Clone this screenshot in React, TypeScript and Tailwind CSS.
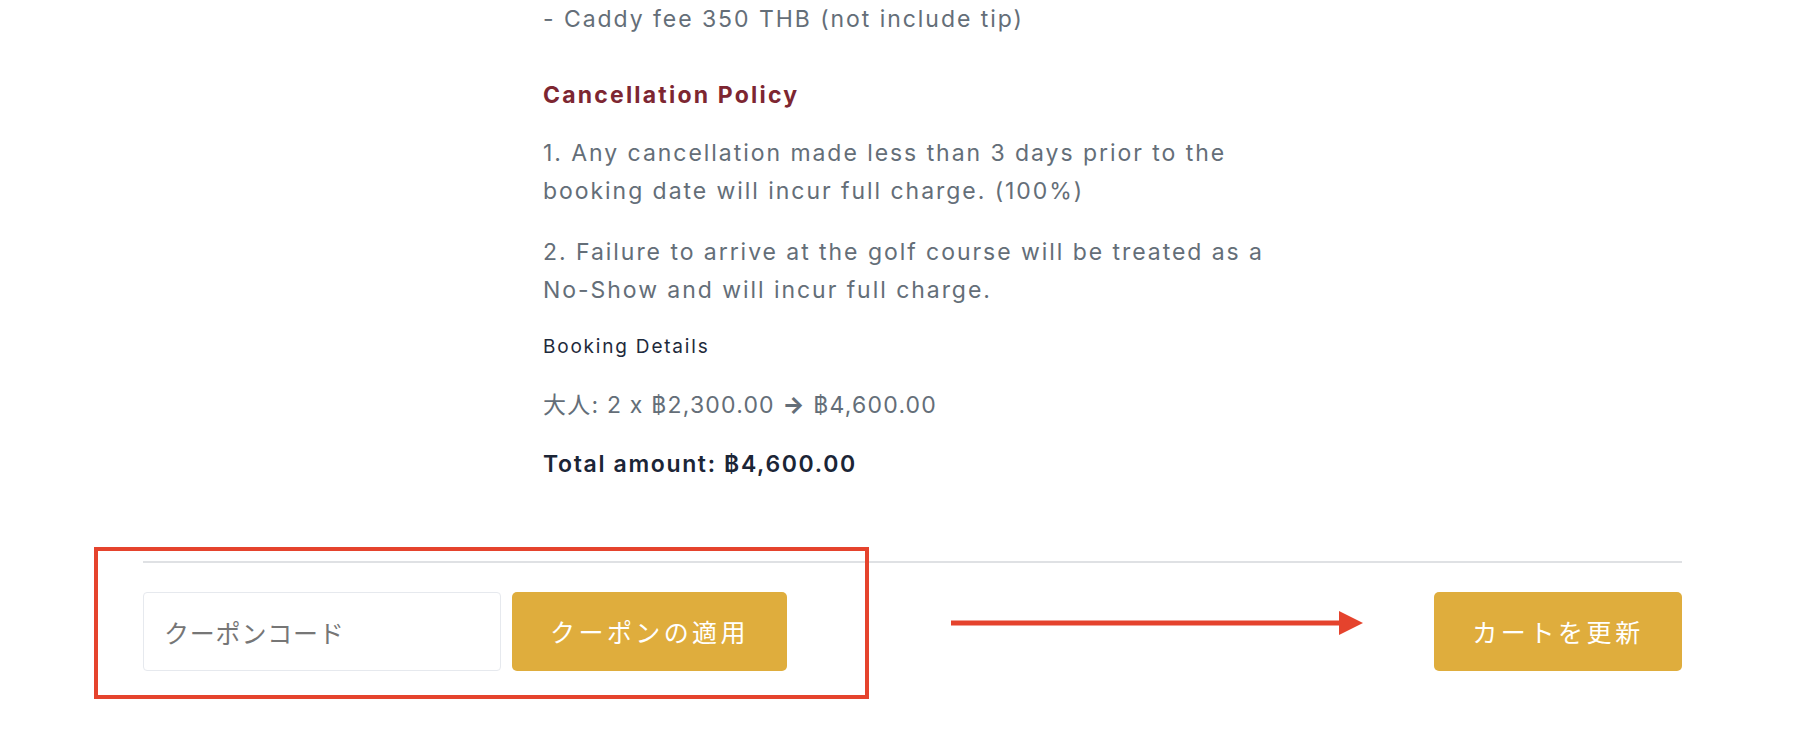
import React from "react";

const bodyFont = {
  fontFamily: "Inter, 'Noto Sans CJK JP', 'DejaVu Sans', sans-serif",
};

export default function App() {
  return (
    <div className="relative h-[744px] w-[1804px] overflow-hidden bg-white">
      <div className="pl-[143px] w-[1682px]">
        <div
          className="ml-[400px] text-[23px] leading-[38px] tracking-[1.95px] text-[#646e78]"
          style={bodyFont}
        >
          <p>- Caddy fee 350 THB (not include tip)</p>
          <h3 className="mt-[38px] text-[23px] font-bold tracking-[2.2px] text-[#7d2631]">
            Cancellation Policy
          </h3>
          <p className="mt-[20px]">
            1. Any cancellation made less than 3 days prior to the
            <br />
            booking date will incur full charge. (100%)
          </p>
          <p className="mt-[23px]">
            2. Failure to arrive at the golf course will be treated as a
            <br />
            No-Show and will incur full charge.
          </p>
          <p className="mt-[23px] text-[19px] leading-[30px] tracking-[1.8px] text-[#1e2a3b]">
            Booking Details
          </p>
          <p className="mt-[24px] tracking-[1.2px]">
            大人: 2 x ฿2,300.00 <span className="font-extrabold">→</span> ฿4,600.00
          </p>
          <p className="mt-[21px] font-semibold tracking-[1.65px] text-[#1b2536]">
            Total amount: ฿4,600.00
          </p>
        </div>

        <div className="mt-[78px] h-[2px] w-[1539px] bg-[#dfe1e4]" />

        <div className="relative mt-[29px] flex h-[79px] w-[1539px] items-center">
          <input
            type="text"
            placeholder="クーポンコード"
            className="h-[79px] w-[358px] rounded-[4px] border border-[#e6e9ee] bg-white pl-[20px] text-[25px] tracking-[0.8px] text-[#555] outline-none placeholder:text-[#767676]"
            style={{ fontFamily: "'Noto Sans CJK JP', sans-serif" }}
          />
          <button
            className="ml-[11px] flex h-[79px] w-[275px] items-center justify-center rounded-[5px] bg-[#dfad3d] text-[25px] tracking-[3.4px] text-white"
            style={{ fontFamily: "'Noto Sans CJK JP', sans-serif" }}
          >
            クーポンの適用
          </button>

          <svg
            className="absolute left-[808px] top-[19px]"
            width="414"
            height="24"
            viewBox="0 0 414 24"
          >
            <rect x="0" y="9.5" width="392" height="5" fill="#e5432d" />
            <polygon points="388,0 412,12 388,24" fill="#e5432d" />
          </svg>

          <button
            className="ml-auto flex h-[79px] w-[248px] items-center justify-center rounded-[5px] bg-[#dfad3d] text-[25px] tracking-[3.6px] text-white"
            style={{ fontFamily: "'Noto Sans CJK JP', sans-serif" }}
          >
            カートを更新
          </button>
        </div>
      </div>

      <div className="pointer-events-none absolute left-[94px] top-[547px] h-[152px] w-[775px] border-[4px] border-[#e5432d]" />
    </div>
  );
}
